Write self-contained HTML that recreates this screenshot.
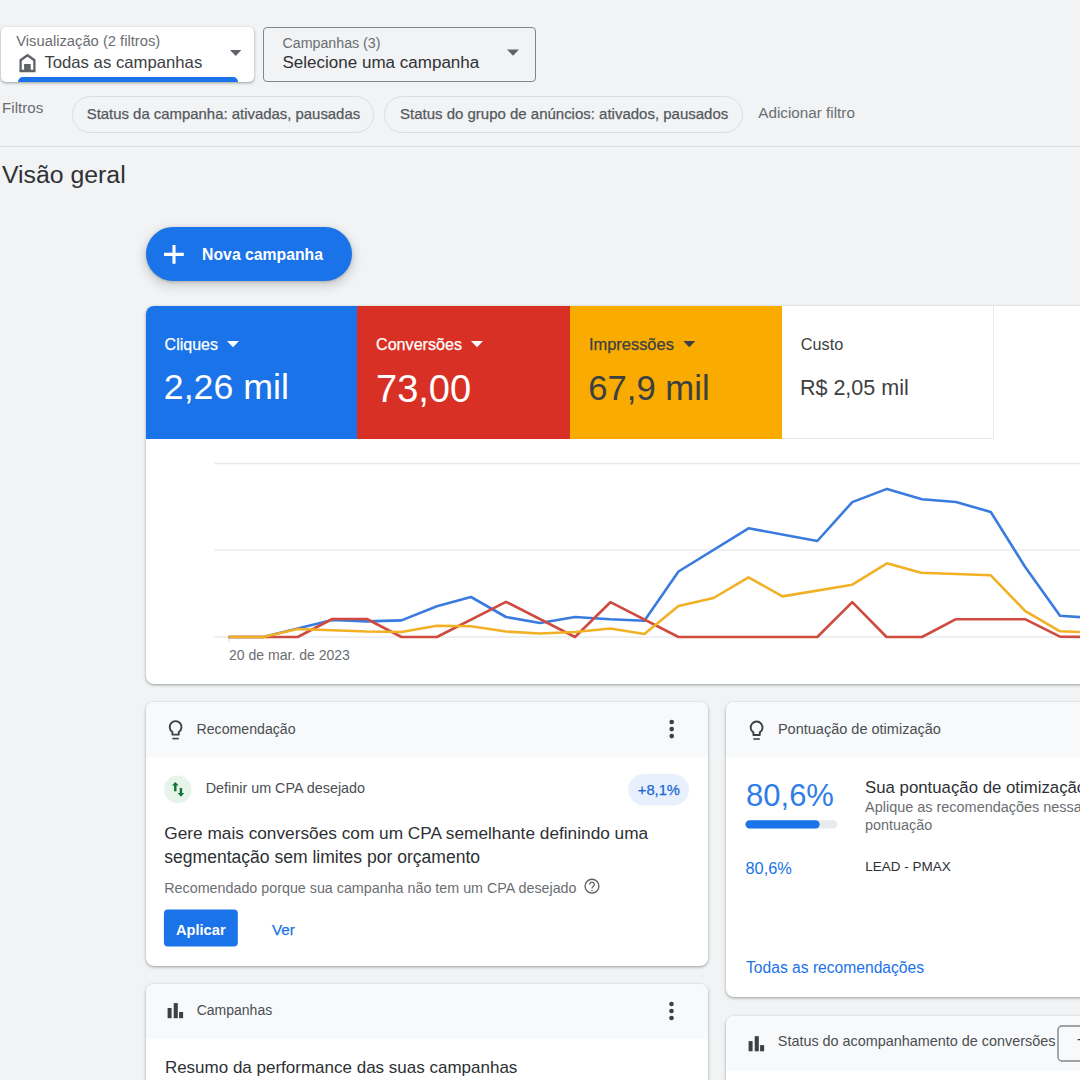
<!DOCTYPE html>
<html><head><meta charset="utf-8">
<style>
*{box-sizing:border-box;margin:0;padding:0}
html,body{width:1080px;height:1080px;overflow:hidden;background:#f1f3f4;font-family:"Liberation Sans",sans-serif;color:#3c4043;position:relative}
.abs{position:absolute}
.t{position:absolute;white-space:nowrap;line-height:1}
.card{position:absolute;background:#fff;border-radius:8px;box-shadow:0 1px 2px rgba(60,64,67,.3),0 1px 3px 1px rgba(60,64,67,.15);overflow:hidden}
.hdr{position:absolute;left:0;top:0;right:0;background:#f8f9fa}
</style></head><body>
<div class="abs" style="left:1px;top:27px;width:253px;height:55px;background:#fff;border-radius:5px;box-shadow:0 1px 2px rgba(60,64,67,.3),0 1px 3px 1px rgba(60,64,67,.15);overflow:hidden"><div class="abs" style="left:17px;top:50px;width:219.5px;height:10px;background:#1a73e8;border-radius:5px 5px 0 0"></div></div>
<div class="abs" style="left:262.5px;top:27px;width:273.5px;height:54.5px;border:1px solid #80868b;border-radius:4px"></div>
<div class="abs" style="left:71.7px;top:96.3px;width:302.5px;height:37px;border:1px solid #dadce0;border-radius:18.5px"></div>
<div class="abs" style="left:384.4px;top:96.3px;width:359px;height:37px;border:1px solid #dadce0;border-radius:18.5px"></div>
<div class="abs" style="left:0;top:146px;width:1080px;height:1px;background:#dadce0"></div>
<div class="abs" style="left:146px;top:226.5px;width:206px;height:54.5px;border-radius:27.5px;background:#1a73e8;box-shadow:0 1px 3px rgba(60,64,67,.3),0 4px 8px 3px rgba(60,64,67,.15)"></div>
<div class="card" style="left:146px;top:306px;width:1000px;height:378px"></div>
<div class="abs" style="left:146px;top:306px;width:211px;height:133px;background:#1a73e8;border-top-left-radius:8px"></div>
<div class="abs" style="left:357px;top:306px;width:213px;height:133px;background:#d93025"></div>
<div class="abs" style="left:570px;top:306px;width:211.5px;height:133px;background:#f9ab00"></div>
<div class="abs" style="left:781.5px;top:306px;width:212px;height:132.5px;border-right:1px solid #e8eaed;border-bottom:1px solid #e8eaed"></div>
<div class="card" style="left:146px;top:702px;width:562px;height:264px"><div class="hdr" style="height:55px"></div></div>
<div class="card" style="left:725.5px;top:702px;width:420px;height:294.5px"><div class="hdr" style="height:55px"></div></div>
<div class="card" style="left:146px;top:984px;width:562px;height:200px"><div class="hdr" style="height:55px"></div></div>
<div class="card" style="left:725.5px;top:1016px;width:420px;height:200px"><div class="hdr" style="height:55px"></div></div>
<svg class="abs" style="left:0;top:0" width="1080" height="1080" viewBox="0 0 1080 1080">
<path d="M214.5 463.5H1080M214.5 550H1080M214.5 637H1080" stroke="#e8eaed" stroke-width="1.3" fill="none"/>
<path d="M229 637v5" stroke="#dadce0" stroke-width="1"/>
<polyline points="228.5,637 263.1,637 297.7,628.6 332.3,620 366.9,621.4 401.5,620.4 436.9,606.2 471,597 506,617 540,623 575,617 610,619.3 644.4,620.7 678.5,571.5 748.5,528.3 817.3,541 852.3,502.1 887,488.9 922,499.2 956,502 990.8,512 1025,566.7 1060,615.8 1094,618" fill="none" stroke="#3a7bdf" stroke-width="2.6" stroke-linejoin="round"/>
<polyline points="228.5,637 297.7,637 332.3,619 366.9,619 401.5,637 436.9,637 506,601.8 575,637 610.4,602.2 678.5,637 817.3,637 852.3,602.2 886.6,637 922,637 956,619.2 1025,619.2 1060,636.7 1094,637" fill="none" stroke="#cf4b3f" stroke-width="2.6" stroke-linejoin="round"/>
<polyline points="228.5,637 263.1,637 297.7,629 332.3,630.2 366.9,631.5 401.5,632 436.9,625.7 471,626.3 506,631.5 540,633.5 575,632 610.4,628.5 644.4,634 678.5,606 713.5,598 748.5,577.3 782.5,596.4 852.3,584.7 887,563.3 921,572.7 990.8,575.3 1025,610.8 1060,631.3 1094,632.5" fill="none" stroke="#f2b124" stroke-width="2.6" stroke-linejoin="round"/>
<!-- house -->
<path d="M20.6 71V60.2L27.5 55.2L34.4 60.2V71Z" fill="none" stroke="#5f6368" stroke-width="2.3" stroke-linejoin="miter"/>
<rect x="24.1" y="64" width="6.6" height="7" fill="#5f6368"/>
<!-- dropdown arrows -->
<path d="M230 50H241.4L235.7 55.9Z" fill="#5f6368"/>
<path d="M507 49.5H519L513 55.7Z" fill="#5f6368"/>
<!-- plus -->
<path d="M174 245V263.8M164 254.4H183.8" stroke="#fff" stroke-width="3.1"/>
<!-- tile arrows -->
<path d="M227 341H239L233 347.2Z" fill="#fff"/>
<path d="M471 341H483L477 347.2Z" fill="#fff"/>
<path d="M683.3 341H695.3L689.3 347.2Z" fill="#3c4043"/>
<!-- bulbs -->
<path d="M172.4 734.6V732A5.9 5.9 0 1 1 178.8 732V734.6Z" fill="none" stroke="#3c4043" stroke-width="1.9" stroke-linejoin="round"/>
<path d="M172.4 738.6H178.8" stroke="#3c4043" stroke-width="1.6"/>
<path d="M753.4 735V732.4A5.9 5.9 0 1 1 759.8 732.4V735Z" fill="none" stroke="#3c4043" stroke-width="1.9" stroke-linejoin="round"/>
<path d="M753.4 739H759.8" stroke="#3c4043" stroke-width="1.6"/>
<!-- kebabs -->
<circle cx="671.7" cy="722" r="2.3" fill="#3c4043"/><circle cx="671.7" cy="729.1" r="2.3" fill="#3c4043"/><circle cx="671.7" cy="736.1" r="2.3" fill="#3c4043"/>
<circle cx="671.5" cy="1004" r="2.3" fill="#3c4043"/><circle cx="671.5" cy="1011" r="2.3" fill="#3c4043"/><circle cx="671.5" cy="1018" r="2.3" fill="#3c4043"/>
<!-- green circle icon -->
<circle cx="177.8" cy="789.4" r="13.8" fill="#e6f4ea"/>
<path d="M175.3 791.3V784.5" stroke="#137333" stroke-width="2.4"/><path d="M172 785.6L175.3 782L178.6 785.6Z" fill="#137333"/>
<path d="M180.9 788V794" stroke="#137333" stroke-width="2.4"/><path d="M177.6 793L180.9 796.8L184.2 793Z" fill="#137333"/>
<!-- chip +8,1% -->
<rect x="628.3" y="773.9" width="60.6" height="31.7" rx="15.85" fill="#e8f0fe"/>
<!-- help -->
<circle cx="592" cy="886.2" r="6.9" fill="none" stroke="#5f6368" stroke-width="1.4"/>
<path d="M589.7 884.6A2.3 2.3 0 1 1 593.4 886.3C592.3 887.1 592 887.6 592 888.6" fill="none" stroke="#5f6368" stroke-width="1.3"/><circle cx="592" cy="890.6" r="0.8" fill="#5f6368"/>
<!-- button aplicar -->
<rect x="163.9" y="909.5" width="73.9" height="37.1" rx="4" fill="#1a73e8"/>
<!-- progress -->
<rect x="745.5" y="820.2" width="91.7" height="8.3" rx="4.15" fill="#e8eaed"/>
<rect x="745.5" y="820.2" width="74.2" height="8.3" rx="4.15" fill="#1a73e8"/>
<!-- bar icons -->
<g fill="#3c4043"><rect x="167.6" y="1008" width="4" height="10.2"/><rect x="173.7" y="1003.1" width="4.1" height="15.1"/><rect x="179.1" y="1012" width="4" height="6.2"/></g>
<g fill="#3c4043"><rect x="748.6" y="1041.1" width="4" height="10.2"/><rect x="754.7" y="1036.2" width="4.1" height="15.1"/><rect x="760.1" y="1045.1" width="4" height="6.2"/></g>
<!-- status box -->
<rect x="1058" y="1026" width="40" height="35" rx="4" fill="#f8f9fa" stroke="#80868b" stroke-width="1.4"/>
</svg>
<div class="t" style="left:16.25px;top:34.31px;font-size:14.75px;color:#6a6e73">Visualização (2 filtros)</div>
<div class="t" style="left:44.40px;top:54.64px;font-size:16.72px;color:#3c4043">Todas as campanhas</div>
<div class="t" style="left:282.50px;top:36.26px;font-size:14.22px;color:#6a6e73">Campanhas (3)</div>
<div class="t" style="left:282.50px;top:54.08px;font-size:17.03px;color:#303134">Selecione uma campanha</div>
<div class="t" style="left:2.10px;top:100.12px;font-size:15.15px;color:#6a6e73">Filtros</div>
<div class="t" style="left:86.70px;top:106.53px;font-size:14.91px;color:#55595e;-webkit-text-stroke:0.25px #55595e">Status da campanha: ativadas, pausadas</div>
<div class="t" style="left:400.00px;top:105.71px;font-size:14.99px;color:#55595e;-webkit-text-stroke:0.25px #55595e">Status do grupo de anúncios: ativados, pausados</div>
<div class="t" style="left:758.30px;top:104.88px;font-size:15.26px;color:#6a6e73">Adicionar filtro</div>
<div class="t" style="left:1.90px;top:163.18px;font-size:24.83px;color:#303134">Visão geral</div>
<div class="t" style="left:202.10px;top:247.24px;font-size:15.78px;color:#fff;font-weight:bold">Nova campanha</div>
<div class="t" style="left:164.60px;top:337.09px;font-size:16.01px;color:#fff;-webkit-text-stroke:0.25px #fff">Cliques</div>
<div class="t" style="left:163.80px;top:370.46px;font-size:35.71px;color:#fff">2,26 mil</div>
<div class="t" style="left:376.00px;top:336.03px;font-size:16.14px;color:#fff;-webkit-text-stroke:0.25px #fff">Conversões</div>
<div class="t" style="left:376.00px;top:369.69px;font-size:38.04px;color:#fff">73,00</div>
<div class="t" style="left:588.90px;top:335.78px;font-size:16.44px;color:#3c4043;-webkit-text-stroke:0.25px #3c4043">Impressões</div>
<div class="t" style="left:588.20px;top:371.33px;font-size:34.69px;color:#3c4043">67,9 mil</div>
<div class="t" style="left:800.80px;top:336.22px;font-size:16.28px;color:#3c4043">Custo</div>
<div class="t" style="left:799.90px;top:378.21px;font-size:21.54px;color:#3c4043">R$ 2,05 mil</div>
<div class="t" style="left:229.00px;top:648.01px;font-size:14.04px;color:#6a6e73">20 de mar. de 2023</div>
<div class="t" style="left:196.50px;top:722.32px;font-size:14.15px;color:#4a4e52">Recomendação</div>
<div class="t" style="left:205.70px;top:780.93px;font-size:14.37px;color:#4a4e52">Definir um CPA desejado</div>
<div class="t" style="left:637.80px;top:783.13px;font-size:14.73px;color:#1967d2;-webkit-text-stroke:0.25px #1967d2">+8,1%</div>
<div class="t" style="left:164.30px;top:825.09px;font-size:17.25px;color:#2d3034">Gere mais conversões com um CPA semelhante definindo uma</div>
<div class="t" style="left:164.30px;top:848.95px;font-size:17.54px;color:#2d3034">segmentação sem limites por orçamento</div>
<div class="t" style="left:164.30px;top:880.68px;font-size:14.31px;color:#6a6e73">Recomendado porque sua campanha não tem um CPA desejado</div>
<div class="t" style="left:176.00px;top:922.71px;font-size:14.63px;color:#fff;font-weight:bold">Aplicar</div>
<div class="t" style="left:272.00px;top:922.23px;font-size:15.2px;color:#1a73e8;-webkit-text-stroke:0.25px #1a73e8">Ver</div>
<div class="t" style="left:777.90px;top:722.31px;font-size:14.52px;color:#4a4e52">Pontuação de otimização</div>
<div class="t" style="left:746.10px;top:781.43px;font-size:30.97px;color:#2f7de8">80,6%</div>
<div class="t" style="left:865.10px;top:779.83px;font-size:16.8px;color:#2d3034">Sua pontuação de otimização</div>
<div class="t" style="left:865.10px;top:800.27px;font-size:14.44px;color:#6a6e73">Aplique as recomendações nessa</div>
<div class="t" style="left:865.10px;top:817.82px;font-size:14.39px;color:#6a6e73">pontuação</div>
<div class="t" style="left:745.50px;top:859.94px;font-size:16.37px;color:#1a73e8">80,6%</div>
<div class="t" style="left:865.30px;top:860.19px;font-size:13.48px;color:#2d3034">LEAD - PMAX</div>
<div class="t" style="left:746.00px;top:959.61px;font-size:15.64px;color:#1a73e8">Todas as recomendações</div>
<div class="t" style="left:196.70px;top:1003.14px;font-size:14.01px;color:#4a4e52">Campanhas</div>
<div class="t" style="left:164.90px;top:1059.40px;font-size:17.01px;color:#2d3034">Resumo da performance das suas campanhas</div>
<div class="t" style="left:777.80px;top:1034.11px;font-size:14.4px;color:#4a4e52">Status do acompanhamento de conversões</div>
<div class="t" style="left:1077.20px;top:1035.80px;font-size:15px;color:#3c4043">T</div>
</body></html>
